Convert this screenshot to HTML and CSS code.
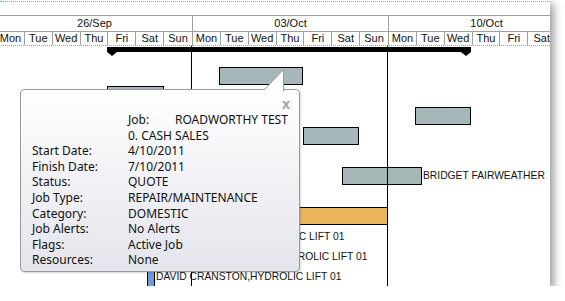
FILE: index.html
```html
<!DOCTYPE html>
<html>
  <head>
    <title>Job Schedule</title>
    <link rel="stylesheet" href="styles.css">
  </head>
  <body>
    <div class="window">
      <div class="header">
        <div class="top-rule"></div>
        <div class="weeks">
          <div class="week">
            <div class="week-label">26/Sep</div>
            <div class="days">
              <span>Mon</span><span>Tue</span><span>Wed</span><span>Thu</span><span>Fri</span><span>Sat</span><span>Sun</span>
            </div>
          </div>
          <div class="week">
            <div class="week-label">03/Oct</div>
            <div class="days">
              <span>Mon</span><span>Tue</span><span>Wed</span><span>Thu</span><span>Fri</span><span>Sat</span><span>Sun</span>
            </div>
          </div>
          <div class="week">
            <div class="week-label">10/Oct</div>
            <div class="days">
              <span>Mon</span><span>Tue</span><span>Wed</span><span>Thu</span><span>Fri</span><span>Sat</span><span>Sun</span>
            </div>
          </div>
        </div>
      </div>

      <div class="chart">
        <div class="summary" style="left: 107px; width: 364px; top: 1px;"></div>

        <div class="bar" style="left: 107px; width: 57px; top: 40px;"></div>
        <div class="bar" style="left: 219px; width: 84px; top: 21px;"></div>
        <div class="bar" style="left: 415px; width: 56px; top: 61px;"></div>
        <div class="bar" style="left: 303px; width: 56px; top: 81px;"></div>
        <div class="bar" style="left: 342px; width: 80px; top: 121px;"></div>
        <div class="bar-label" style="left: 423px; top: 121px;">BRIDGET FAIRWEATHER</div>
        <div class="bar orange" style="left: 150px; width: 238px; top: 161px;"></div>

        <div class="bar-label" style="left: 159px; top: 182px;">DAVID CRANSTON,HYDROLIC LIFT 01</div>
        <div class="bar-label" style="left: 182px; top: 202px;">DAVID CRANSTON,HYDROLIC LIFT 01</div>
        <div class="bar blue" style="left: 147px; width: 8px; top: 223px;"></div>
        <div class="bar-label" style="left: 156px; top: 222px;">DAVID CRANSTON,HYDROLIC LIFT 01</div>

        <div class="week-line" style="left: 191px;"></div>
        <div class="week-line" style="left: 387px;"></div>
      </div>

      <div class="tooltip">
        <svg class="tail" width="20" height="22" viewBox="0 0 20 22">
          <polygon points="0,21 19.5,0.5 19.5,22 0,22" fill="#ffffff" />
          <polyline points="0,21 19.5,0.5 19.5,22" fill="none" stroke="#9a9a9a" stroke-width="1" />
        </svg>
        <span class="close">x</span>
        <div class="details">
          <span></span><span class="job"><span class="job-tag">Job:</span>ROADWORTHY TEST</span>
          <span></span><span>0. CASH SALES</span>
          <span>Start Date:</span><span>4/10/2011</span>
          <span>Finish Date:</span><span>7/10/2011</span>
          <span>Status:</span><span>QUOTE</span>
          <span>Job Type:</span><span>REPAIR/MAINTENANCE</span>
          <span>Category:</span><span>DOMESTIC</span>
          <span>Job Alerts:</span><span>No Alerts</span>
          <span>Flags:</span><span>Active Job</span>
          <span>Resources:</span><span>None</span>
        </div>
      </div>
    </div>
  </body>
</html>
```

FILE: styles.css
```css
body {
  margin: 0;
  background-color: #ffffff;
  font-family: "Liberation Sans", Arial, sans-serif;
}

.window {
  position: relative;
  width: 550px;
  height: 286px;
  background-color: #ffffff;
  overflow: hidden;
  box-shadow: 3px 4px 9px rgba(0, 0, 0, 0.45);
}

/* timeline header */

.header {
  padding-top: 1px;
  height: 45px;
}

.top-rule {
  border-top: 1px dotted #45c7c0;
  margin-bottom: 13px;
}

.weeks {
  display: flex;
  margin-left: -3px;
  border-top: 1px solid #a0a0a0;
}

.week {
  flex: none;
  width: 195px;
  border-right: 1px solid #a0a0a0;
}

.week-label {
  height: 15px;
  line-height: 15px;
  font-size: 11px;
  text-align: center;
  color: #111;
  border-bottom: 1px solid #a0a0a0;
}

.days {
  display: grid;
  grid-template-columns: repeat(7, 1fr);
  border-bottom: 1px dotted #45c7c0;
}

.days span {
  height: 13px;
  line-height: 13px;
  font-size: 11px;
  text-align: center;
  color: #111;
  border-right: 1px solid #a0a0a0;
}

.days span:last-child {
  border-right: none;
}

/* chart body */

.chart {
  position: relative;
  height: 240px;
}

.summary {
  position: absolute;
  height: 5px;
  background-color: #000;
}

.summary::before,
.summary::after {
  content: "";
  position: absolute;
  top: 5px;
  border-left: 5px solid transparent;
  border-right: 5px solid transparent;
  border-top: 4px solid #000;
}

.summary::before {
  left: 0;
}

.summary::after {
  right: 0;
}

.bar {
  position: absolute;
  box-sizing: border-box;
  height: 18px;
  background-color: #a5b7b9;
  border: 1px solid #000;
}

.bar.orange {
  background-color: #edb45e;
}

.bar.blue {
  background-color: #6f9ad2;
}

.bar-label {
  position: absolute;
  height: 18px;
  line-height: 18px;
  font-size: 10.3px;
  color: #111;
  white-space: nowrap;
}

.week-line {
  position: absolute;
  top: 0;
  bottom: 0;
  width: 1px;
  background-color: #000;
}

/* popup */

.tooltip {
  position: absolute;
  left: 20px;
  top: 89px;
  width: 280px;
  height: 183px;
  box-sizing: border-box;
  padding: 22px 0 0 11px;
  border: 1px solid #9a9a9a;
  border-radius: 4px;
  background: linear-gradient(to bottom, #ffffff 0%, #f3f3f7 45%, #e4e4ec 100%);
  box-shadow: 1px 1px 2px rgba(0, 0, 0, 0.15);
  font-family: "Noto Sans", sans-serif;
  font-size: 12px;
  color: #111;
}

.tail {
  position: absolute;
  left: 243px;
  top: -21px;
}

.close {
  position: absolute;
  right: 9px;
  top: 4px;
  font-size: 14px;
  font-weight: bold;
  color: #a8a8a8;
}

.details {
  display: grid;
  grid-template-columns: 96px auto;
  line-height: 15.6px;
}

.job-tag {
  display: inline-block;
  width: 47px;
}
```
